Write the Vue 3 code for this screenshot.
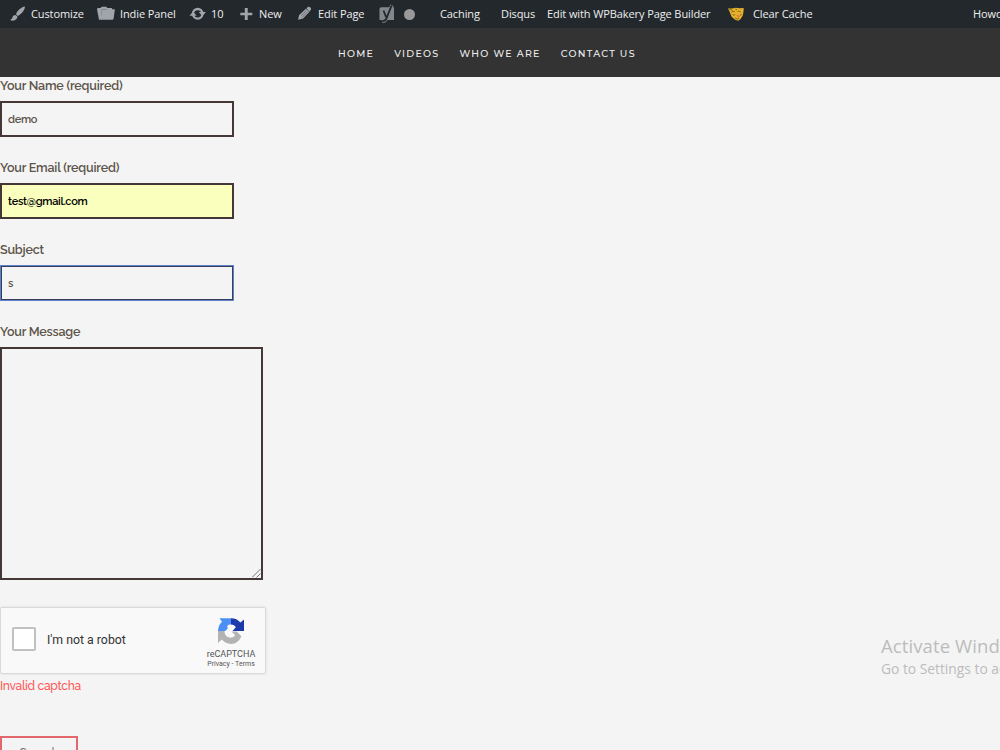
<template>
  <div class="page">
    <div class="adminbar">
      <a v-for="item in adminItems" :key="item.id" class="item" :class="item.id">
        <svg v-if="item.id === 'customize'" class="icon" width="16" height="16" viewBox="0 0 16 16">
          <path d="M14.800.6c-3 .4-7.600 4.200-8.600 7.100-.2.600.2 1 .7 1.500s1 .8 1.500.5C11.100 8.300 15.500 3.600 14.800.6zM5.300 8.900c-2 .1-2.700 1.500-3 2.900-.2 1-1 1.800-2.300 2.300 3.400 1.300 7.200.4 7.500-3.500z" />
        </svg>
        <svg v-if="item.id === 'panel'" class="icon" width="19" height="16" viewBox="0 0 19 16">
          <path d="M0 3.200l.6-1.200h3L4.800.7h4.500l1 1.300h4.500l.5 1H5L3.800 13.700H2z" />
          <path d="M4.700 4.200l.7-1h4.200l1.300-.8h3.400l.8.9h2.400l.3.900-1.300 8.800-.9.800H3.600z" />
        </svg>
        <svg v-if="item.id === 'updates'" class="icon" width="16" height="16" viewBox="0 0 16 16">
          <circle class="ring" cx="7.700" cy="7.800" r="4.800" />
          <path class="gap" d="M9 6.100l6 4M6.300 9.700L0 5.700" />
          <path d="M8.800 5.900h7.100l-3.500 4.400zM-.5 9.800h7.100L3.100 5.400z" />
        </svg>
        <svg v-if="item.id === 'new'" class="icon" width="13" height="16" viewBox="0 0 13 16">
          <path d="M4.800 2.100h2.900v4.700h4.600v2.500H7.700V14H4.800V9.300H.3V6.800h4.500z" />
        </svg>
        <svg v-if="item.id === 'edit'" class="icon" width="15" height="16" viewBox="0 0 15 16">
          <path d="M8.400 2.300L10 1c.8-.5 1.600-.3 2.400.6.800.8.9 1.500.3 2.400l-1.300 1.700zM7.900 2.700l3.400 3.400-6.200 6.500L0 13.800l1.200-4.900z" />
          <path class="cut" d="M3 9.800l5.400-5.300M4.300 11.200l5.400-5.400" />
        </svg>
        <svg v-if="item.id === 'yoast'" class="icon" width="17" height="20" viewBox="0 0 17 20">
          <path d="M2.300 4.200H15v12.900H.5V6c0-1 .7-1.800 1.800-1.800z" />
          <path class="y-rim" d="M12.800 2.200L7.500 15.400c-.7 1.900-1.800 2.900-4 3" />
          <path class="y-dark" d="M4.500 7.500l2.600 6.700M12.600 2.400L7.500 15.400c-.7 1.900-1.800 2.700-3.800 2.800" />
        </svg>
        <i v-if="item.id === 'score'" class="dot"></i>
        <svg v-if="item.id === 'cache'" class="icon tiger" width="16" height="15" viewBox="0 0 16 15">
          <path d="M0 1.500L4 1.600 7.800.8l4 .5L15.700 1l-.2 3.500-.7 4-2.200 3.400-2.300 1.900-3.200-1L3.600 9.800 1.500 4.500z" />
          <path class="stripes" d="M1.500 2.400l3 .9M3.500 5.300c1-1 2.300-1.200 3.500-.5M9.500 4.500c1.400-.6 2.800-.3 3.600.8M4.500 7.500c1 .8 2 .8 2.700.1M7 11l2 1 2.200-.4M13.300 6.900l-.6 1.700M7.500 2l1.500.8" />
          <path class="muzzle" d="M8.200 8.600l2.500-.8 1.300 1.200-1.500 1.800z" />
        </svg>
        <span v-if="item.label" class="label">{{ item.label }}</span>
      </a>
    </div>

    <nav class="menu">
      <a v-for="link in links" :key="link">{{ link }}</a>
    </nav>

    <form class="contact" @submit.prevent>
      <div v-for="field in fields" :key="field.id" class="field">
        <label :for="field.id">{{ field.label }}</label>
        <input :id="field.id" v-model="field.value" :class="field.state" type="text" />
      </div>
      <div class="field message">
        <label for="message">Your Message</label>
        <div class="area">
          <textarea id="message" v-model="message"></textarea>
          <svg class="grip" width="9" height="9" viewBox="0 0 9 9"><path d="M0 8.500L8.500 0M4.500 8.500l4-4" /></svg>
        </div>
      </div>

      <div class="captcha">
        <span class="checkbox"></span>
        <span class="robot">I'm not a robot</span>
        <div class="brand">
          <svg width="28" height="28" viewBox="0 0 28 28">
            <path fill="#4a90f5" d="M1 14A13 13 0 0 1 5 4.700L2.500 1.200H14v6.300c-3.800 0-4.300 2.200-3.100 3.700L8.300 14z" />
            <path fill="#1c3aa9" d="M14 1.200c4 0 7.100 1.500 9.400 4.200L27 2.500V14H15.500l3.300-3.700C17.700 8.300 16.300 7.500 14 7.500z" />
            <path fill="#b3b3b3" d="M1 14h6.400c.2 4 2.300 6.200 5.300 6.600 2.500.3 4.100-.6 5.500-2.300L14.500 14.600h5.200l4.700 4.700C22 24.600 18.500 27 14 27c-3.800 0-6.800-1.700-9.200-4.400L1 26z" />
          </svg>
          <span class="name">reCAPTCHA</span>
          <span class="legal">Privacy - Terms</span>
        </div>
      </div>
      <p class="error">Invalid captcha</p>
      <button class="submit" type="submit">Search</button>
    </form>

    <div class="watermark">
      <div class="title">Activate Windows</div>
      <div class="hint">Go to Settings to activate Windows.</div>
    </div>
  </div>
</template>

<script setup>
import { ref } from 'vue';

const adminItems = [
  { id: 'customize', label: 'Customize' },
  { id: 'panel', label: 'Indie Panel' },
  { id: 'updates', label: '10' },
  { id: 'new', label: 'New' },
  { id: 'edit', label: 'Edit Page' },
  { id: 'yoast' },
  { id: 'score' },
  { id: 'caching', label: 'Caching' },
  { id: 'disqus', label: 'Disqus' },
  { id: 'bakery', label: 'Edit with WPBakery Page Builder' },
  { id: 'cache', label: 'Clear Cache' },
  { id: 'howdy', label: 'Howdy, admin' },
];

const links = ['HOME', 'VIDEOS', 'WHO WE ARE', 'CONTACT US'];

const fields = ref([
  { id: 'name', label: 'Your Name (required)', value: 'demo', state: '' },
  { id: 'email', label: 'Your Email (required)', value: 'test@gmail.com', state: 'autofill' },
  { id: 'subject', label: 'Subject', value: 's', state: 'active' },
]);

const message = ref('');
</script>

<style>
body {
  background: #f4f4f4;
  overflow: hidden;
}
</style>

<style scoped>
.page {
  position: relative;
  width: 1000px;
  height: 750px;
  overflow: hidden;
  background: #f4f4f4;
  font-family: Raleway, Lato, "Open Sans", sans-serif;
}
.adminbar {
  display: grid;
  grid-template-columns: 87px 93px 50px 58px 81px 25px 36px 61px 46px 181px 245px 100px;
  height: 28px;
  padding-left: 10px;
  background: #23282d;
  color: #eee;
  font: 11px/28px "Segoe UI", "Open Sans", sans-serif;
}
.item {
  display: flex;
  align-items: center;
  white-space: nowrap;
}
.icon {
  flex: none;
  fill: #a0a5aa;
}
.customize .icon { margin-right: 5px; }
.panel .icon { margin-right: 4px; }
.updates .icon { margin-right: 5px; overflow: visible; }
.new .icon { margin-right: 6px; }
.edit .icon { margin-right: 5px; }
.cache .icon { margin-right: 9px; }
.label {
  letter-spacing: -0.1px;
}
.ring {
  fill: none;
  stroke: #a0a5aa;
  stroke-width: 2.300;
}
.gap {
  fill: none;
  stroke: #23282d;
  stroke-width: 0.9;
}
.cut {
  fill: none;
  stroke: #23282d;
  stroke-width: 0.4;
}
.yoast .icon {
  fill: #82878c;
  margin-top: -2px;
}
.y-rim {
  fill: none;
  stroke: #82878c;
  stroke-width: 3.200;
}
.y-dark {
  fill: none;
  stroke: #23282d;
  stroke-width: 1.800;
}
.dot {
  width: 11px;
  height: 11px;
  border-radius: 50%;
  background: #999;
}
.tiger {
  fill: #e5b32b;
}
.stripes {
  fill: none;
  stroke: #69501b;
  stroke-width: 0.8;
}
.muzzle {
  fill: #ed7446;
}
.menu {
  display: flex;
  gap: 20px;
  height: 49px;
  padding-left: 338px;
  background: #333;
  color: #eee;
  font: 500 9.500px/51px Montserrat, Inter, sans-serif;
  letter-spacing: 1.270px;
}
.contact {
  color: #5c554b;
}
.field {
  height: 82px;
}
.field label {
  display: block;
  height: 24px;
  font-size: 12.500px;
  font-weight: 600;
  letter-spacing: -0.190px;
  line-height: 18px;
}
.field input {
  display: block;
  box-sizing: border-box;
  width: 233.500px;
  height: 36px;
  padding: 0 6px;
  border: 2px solid #463737;
  outline: none;
  background: transparent;
  color: #5c554b;
  font: 600 11px Raleway, Lato, sans-serif;
  letter-spacing: -0.300px;
}
.field input.autofill {
  background: #faffbd;
  color: #000;
}
.field input.active {
  padding: 0 7px;
  border: 1px solid #5d80c8;
  box-shadow: inset 0 0 0 1px #38405d;
}
.field.message {
  height: 284px;
}
.area {
  position: relative;
  width: 263px;
  height: 233px;
}
.area textarea {
  display: block;
  box-sizing: border-box;
  width: 263px;
  height: 233px;
  border: 2px solid #463737;
  outline: none;
  background: transparent;
  resize: none;
}
.grip {
  position: absolute;
  right: 2px;
  bottom: 2px;
  fill: none;
  stroke: #555;
  stroke-width: 0.8;
}
.captcha {
  display: flex;
  align-items: center;
  box-sizing: border-box;
  width: 266px;
  height: 67px;
  padding-left: 11px;
  border: 1px solid #d9d9d9;
  border-radius: 2px;
  background: #f9f9f9;
  box-shadow: 0 0 3px rgba(0, 0, 0, 0.1);
  font-family: Roboto, sans-serif;
}
.checkbox {
  box-sizing: border-box;
  width: 24px;
  height: 24px;
  margin-top: -3px;
  border: 2px solid #c1c1c1;
  border-radius: 2px;
  background: #fff;
}
.robot {
  width: 160px;
  margin: -1px 0 0 11px;
  color: #333;
  font-size: 12.300px;
}
.brand {
  display: flex;
  flex-direction: column;
  align-items: center;
  width: 48px;
  padding-top: 4px;
  color: #555;
}
.brand svg {
  margin: 0 1px 3px 0;
}
.name {
  font-size: 9px;
  line-height: 12px;
}
.legal {
  font-size: 7px;
  line-height: 9px;
  white-space: nowrap;
}
.error {
  margin: 3px 0 0;
  height: 60px;
  color: #ff5757;
  font-size: 12px;
  font-weight: 500;
  letter-spacing: -0.280px;
  line-height: 19px;
}
.submit {
  display: block;
  box-sizing: border-box;
  width: 78px;
  height: 34px;
  margin-top: -1px;
  padding: 0;
  border: 2px solid #e3686c;
  background: transparent;
  color: #777;
  font: 500 12px/28px Raleway, Lato, sans-serif;
}
.watermark {
  position: absolute;
  left: 881px;
  top: 634px;
  color: #bcbcbc;
  font-family: "Segoe UI", "Open Sans", sans-serif;
  white-space: nowrap;
}
.title {
  font-size: 18.500px;
  letter-spacing: 0.100px;
  line-height: 24px;
}
.hint {
  font-size: 13.800px;
  line-height: 21px;
}
</style>
